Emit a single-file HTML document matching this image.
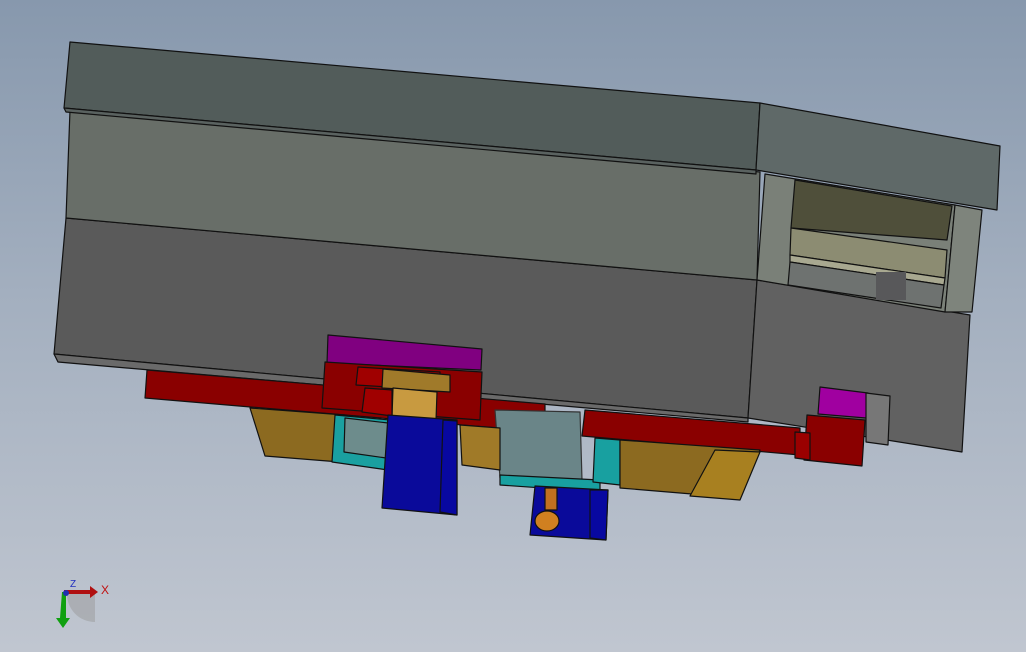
<!DOCTYPE html>
<html><head><meta charset="utf-8"><style>
html,body{margin:0;padding:0;width:1026px;height:652px;overflow:hidden}
body{background:linear-gradient(180deg,#8798ad 0%,#a3afbf 45%,#c0c6d0 100%)}
svg{position:absolute;left:0;top:0}
</style></head><body>
<svg width="1026" height="652" viewBox="0 0 1026 652" stroke="#111" stroke-width="1.2" stroke-linejoin="round">
<polygon points="66,218 757,280 748,418 54,354" fill="#5a5a5a"/>
<polygon points="757,280 970,315 962,452 748,418" fill="#616161"/>
<polygon points="54,354 748,418 748,422 58,362" fill="#6a6a6a"/>
<polygon points="70,110 760,172 757,280 66,218" fill="#686e68"/>
<polygon points="765,174 955,205 945,312 757,280" fill="#7a8078"/>
<polygon points="795,180 952,206 947,240 791,228" fill="#4f4f3a"/>
<polygon points="791,228 947,250 945,278 790,255" fill="#8c8c72"/>
<polygon points="790,255 945,278 944,285 790,262" fill="#a8a890"/>
<polygon points="790,262 944,285 941,308 788,285" fill="#6e7270"/>
<rect x="876" y="272" width="30" height="28" fill="#58585a" stroke="none"/>
<polygon points="955,205 982,210 972,312 945,312" fill="#7e847c"/>
<polygon points="70,42 760,103 756,170 64,108" fill="#525c5a"/>
<polygon points="760,103 1000,146 997,210 756,170" fill="#5f6968"/>
<polygon points="64,108 756,170 756,174 66,112" fill="#5a6260"/>
<polygon points="147,370 545,404 545,432 145,398" fill="#8a0000"/>
<polygon points="585,410 800,428 800,455 582,436" fill="#8a0000"/>
<polygon points="250,408 345,415 340,462 265,456" fill="#8c6a20"/>
<polygon points="335,415 390,420 388,470 332,462" fill="#1aa0a0"/>
<polygon points="345,418 388,423 386,458 344,452" fill="#6d8c8c"/>
<polygon points="495,410 580,412 582,480 500,478" fill="#6a8588" stroke="#333"/>
<polygon points="500,475 600,480 600,492 500,485" fill="#18a0a0"/>
<polygon points="460,425 500,428 500,470 462,465" fill="#a07a28"/>
<polygon points="595,438 620,440 620,485 593,482" fill="#18a0a0"/>
<polygon points="620,440 760,450 740,498 620,488" fill="#8c6a20"/>
<polygon points="715,450 760,452 740,500 690,496" fill="#a88020"/>
<polygon points="328,335 482,349 481,370 327,363" fill="#800080"/>
<polygon points="325,362 482,372 480,420 322,408" fill="#8a0000"/>
<polygon points="358,367 440,372 440,390 356,385" fill="#a00000"/>
<polygon points="383,369 450,375 450,392 382,388" fill="#a07a2a"/>
<polygon points="393,388 437,392 436,420 392,417" fill="#c89a40"/>
<polygon points="365,388 392,390 392,416 362,412" fill="#a00000"/>
<polygon points="388,415 457,420 457,515 382,508" fill="#0a0a9a"/>
<polygon points="443,420 457,421 457,515 440,512" fill="#0808a0"/>
<polygon points="535,486 608,490 606,540 530,535" fill="#0a0a9a"/>
<polygon points="590,490 608,490 606,540 590,538" fill="#0808a0"/>
<rect x="545" y="488" width="12" height="22" fill="#c07020"/>
<ellipse cx="547" cy="521" rx="12" ry="10" fill="#d08020"/>
<polygon points="820,387 868,393 866,418 818,414" fill="#a000a0"/>
<polygon points="866,393 890,396 888,445 866,442" fill="#777"/>
<polygon points="807,415 865,420 862,466 804,460" fill="#8a0000"/>
<polygon points="795,432 810,433 810,460 795,458" fill="#9a0000"/>
<g stroke="none">
<path d="M67,593 A28,28 0 0 0 95,622 L95,593 Z" fill="#999" opacity="0.5"/>
<polygon points="64,590 90,590 90,586 98,592 90,598 90,594 64,594" fill="#b01010"/>
<polygon points="62,592 66,592 66,618 70,618 63,628 56,618 60,618" fill="#10a010"/>
<circle cx="66" cy="593" r="3" fill="#2030b0"/>
</g>
<text x="101" y="594" font-family="Liberation Sans, sans-serif" font-size="12" fill="#c01010" stroke="none">X</text>
<text x="70" y="587" font-family="Liberation Sans, sans-serif" font-size="10" fill="#2030c0" stroke="none">Z</text>
</svg>
</body></html>
